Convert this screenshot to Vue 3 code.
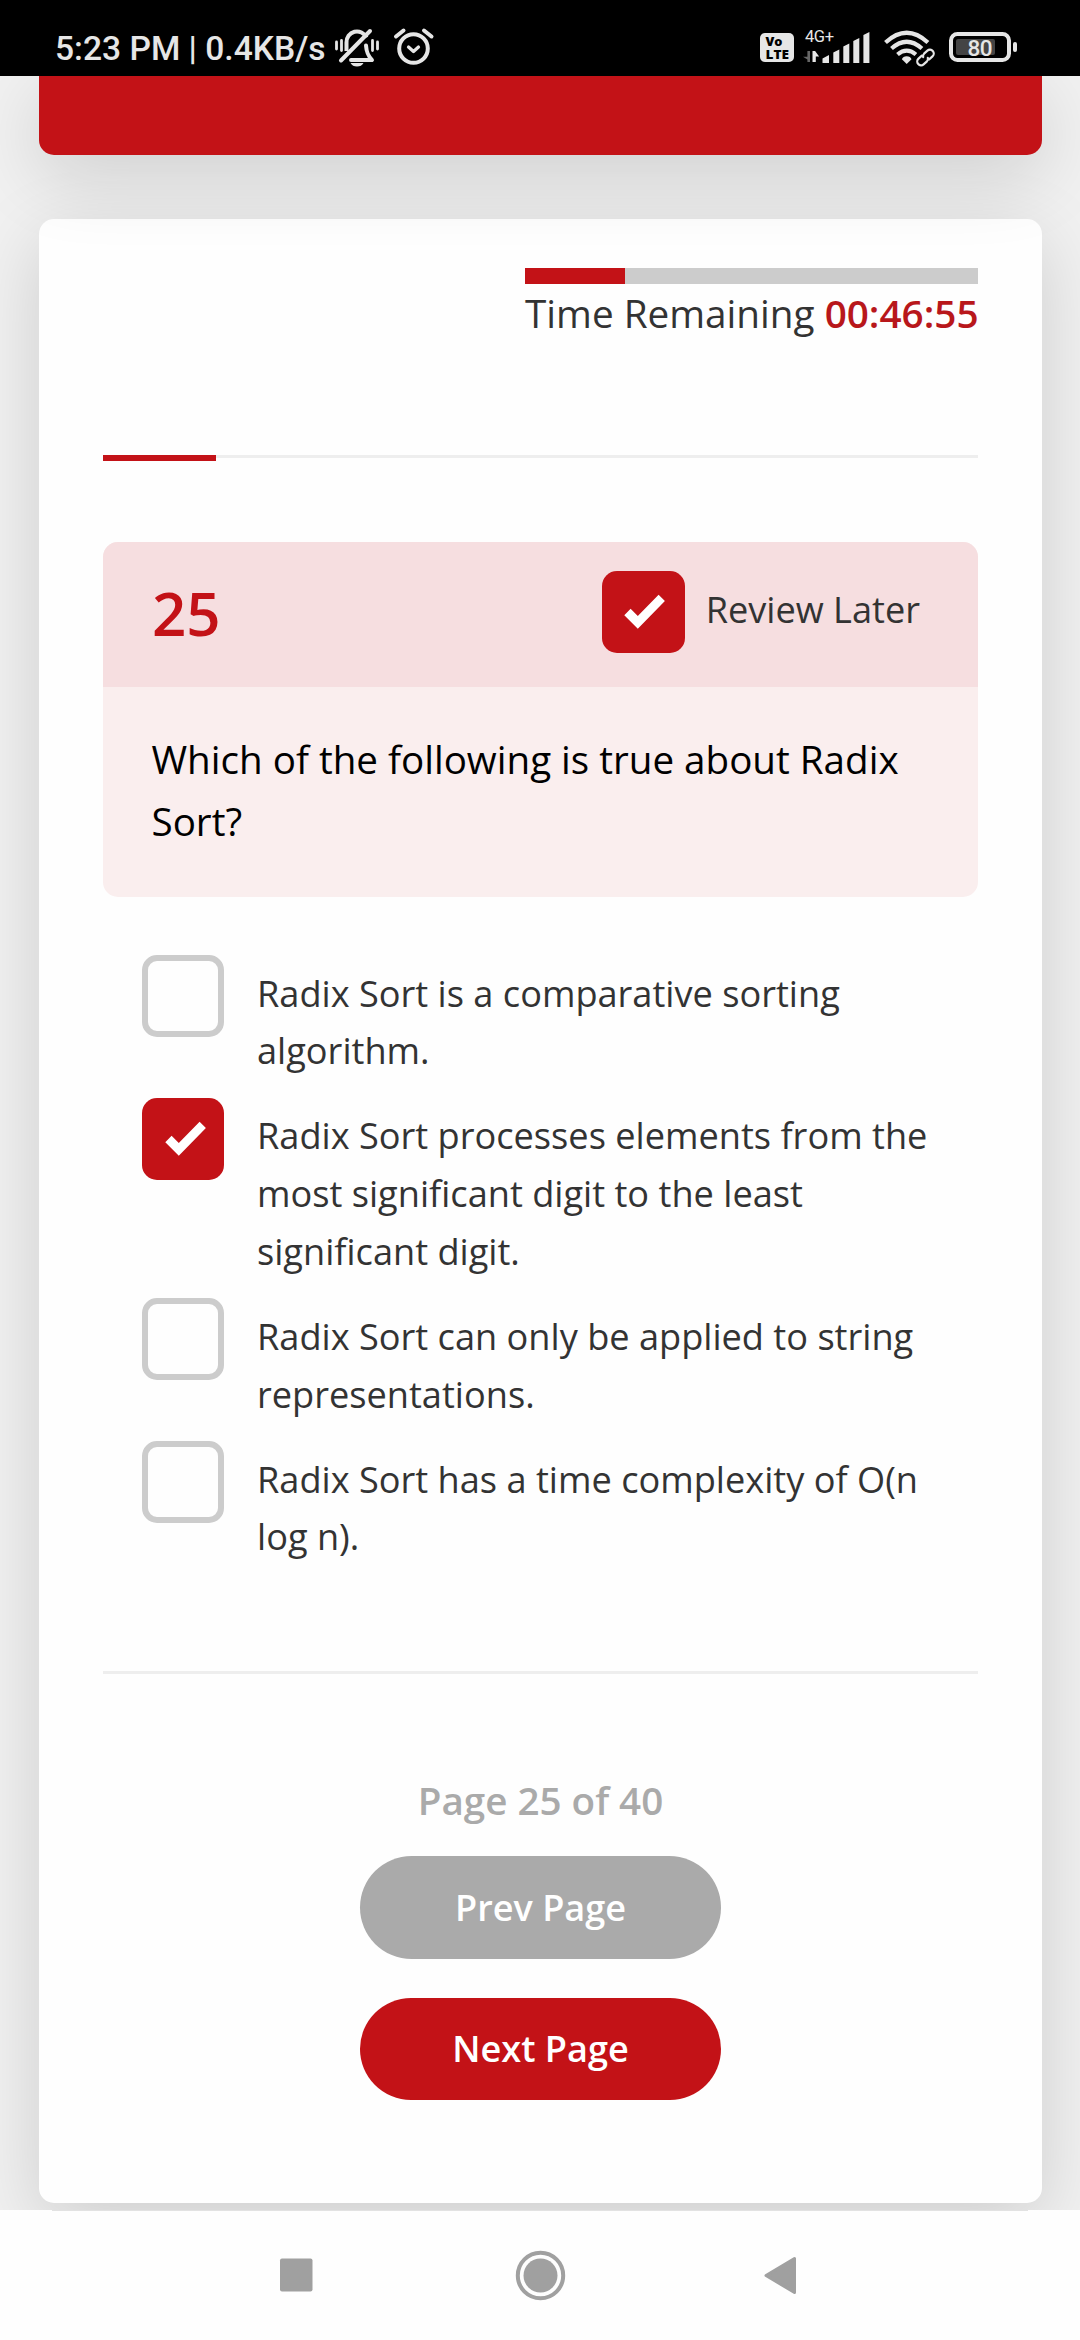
<script setup>
const question = {
  number: 25,
  text: 'Which of the following is true about Radix Sort?',
  options: [
    { text: 'Radix Sort is a comparative sorting algorithm.', checked: false },
    { text: 'Radix Sort processes elements from the most significant digit to the least significant digit.', checked: true },
    { text: 'Radix Sort can only be applied to string representations.', checked: false },
    { text: 'Radix Sort has a time complexity of O(n log n).', checked: false },
  ],
}
</script>

<template>
  <div class="screen">
    <header class="status">
      <span class="clock">5:23 PM | 0.4KB/s</span>
      <svg class="bell" width="46" height="42" viewBox="334 27 46 42" fill="none" stroke="#e6e6e6">
        <path d="M346.500 51V42.500a10.500 10.500 0 0 1 20-5" stroke-width="4" />
        <path d="M366 45.500c.5 7 2 10 6 14.500H351" stroke-width="4" stroke-linejoin="round" stroke-linecap="round" />
        <path d="M341 60.500L370 31" stroke-width="4" stroke-linecap="round" />
        <path d="M350.500 63h13q-2 3.600-6.500 3.600t-6.500-3.600z" fill="#e6e6e6" stroke="none" />
        <path d="M336.500 42v7M341.500 40.500v10M372.500 40.500v10M377.500 42v7" stroke-width="2.800" stroke-linecap="round" />
      </svg>
      <svg class="alarm" width="42" height="42" viewBox="393 27 42 42" fill="none" stroke="#e6e6e6" stroke-linecap="round">
        <circle cx="413.500" cy="48.500" r="14.300" stroke-width="4" />
        <path d="M408.500 47l5 4.500 5-4.500" stroke-width="3.200" stroke-linejoin="round" />
        <path d="M396 36.500l7.500-6M431.500 36.500l-7.500-6" stroke-width="4" />
      </svg>
      <span class="spacer"></span>
      <svg class="system" width="260" height="44" viewBox="758 26 260 44">
        <rect x="760" y="33" width="34" height="29" rx="5" fill="#e6e6e6" />
        <text class="volte"><tspan x="765.500" y="46" textLength="17" lengthAdjust="spacingAndGlyphs">Vo</tspan><tspan x="765.500" y="58.500" textLength="23.500" lengthAdjust="spacingAndGlyphs">LTE</tspan></text>
        <text x="805" y="41.800" class="network" textLength="29">4G+</text>
        <path d="M810 51v11h-2.600v-2.500l-4.400-2.800h4.400V51z" fill="#666" />
        <path d="M812.500 62V51h2.600l4 5.600h-3.300V62z" fill="#e6e6e6" />
        <g fill="#e6e6e6">
          <path d="M822.500 63v-4.500l6.500-3.500v8zM833.300 63v-10.500l6-3v13.500zM843.300 63v-16.500l6-3v19.500zM853.300 63v-22l6-3v25zM863.400 63v-28l6-3v31z" />
          <path d="M906.700 64l-4.800-4.800q1-3 4.800-3t4.800 3z" />
        </g>
        <g fill="none" stroke="#e6e6e6" stroke-width="4.200">
          <path d="M885.500 42.500q21.200-19.500 42.400 0M891.500 48.500q15.200-13.600 30.400 0M897.500 54.500q9.200-7.600 18.400 0" />
        </g>
        <g fill="none" stroke-linecap="round" transform="rotate(-42 925.500 57.500)">
          <path d="M922 53.700h-2.500a3.800 3.800 0 0 0 0 7.600h4.500M929 61.300h2.500a3.800 3.800 0 0 0 0-7.600H927M922.500 57.500h6" stroke="#000" stroke-width="5" />
          <path d="M924 53.700h-4.500a3.800 3.800 0 0 0 0 7.600h4.500a3.500 3.500 0 0 0 3-2M927 61.300h4.500a3.800 3.800 0 0 0 0-7.600H927a3.500 3.500 0 0 0-3 2" stroke="#e6e6e6" stroke-width="2.200" />
        </g>
        <rect x="951" y="34" width="58" height="26" rx="6.500" fill="none" stroke="#e6e6e6" stroke-width="4" />
        <rect x="956" y="39" width="39" height="16" rx="2" fill="#444" />
        <rect x="1013" y="42" width="4" height="10" rx="2" fill="#e6e6e6" />
        <text x="967.500" y="55.700" class="level" textLength="25">80</text>
      </svg>
    </header>

    <main class="page">
      <section class="banner"></section>

      <section class="card">
        <div class="timer">
          <div class="timer-track"><div class="timer-fill"></div></div>
          <p class="timer-text">Time Remaining <b>00:46:55</b></p>
        </div>

        <div class="progress"><div class="progress-fill"></div></div>

        <article class="question">
          <div class="question-head">
            <span class="number">{{ question.number }}</span>
            <span class="box checked">
              <svg width="82" height="82" viewBox="0 0 82 82"><path d="M22.300 44.300l6.300-6.500 7.200 7.200 20.800-21.300 6.300 6.300-27.100 27.700z" fill="#fff" /></svg>
            </span>
            <span class="review">Review Later</span>
          </div>
          <p class="question-text">{{ question.text }}</p>
        </article>

        <ul class="options">
          <li v-for="option in question.options" :key="option.text" class="option">
            <span class="box" :class="{ checked: option.checked }">
              <svg v-if="option.checked" width="82" height="82" viewBox="0 0 82 82"><path d="M23.300 44.300l6.300-6.500 7.200 7.200 20.800-21.300 6.300 6.300-27.100 27.700z" fill="#fff" /></svg>
            </span>
            <span class="option-text">{{ option.text }}</span>
          </li>
        </ul>

        <hr class="rule" />

        <footer class="pager">
          <p class="page-count">Page 25 of 40</p>
          <button class="btn prev">Prev Page</button>
          <button class="btn next">Next Page</button>
        </footer>
      </section>
    </main>

    <nav class="navbar">
      <svg width="1080" height="129" viewBox="0 0 1080 129" fill="#a0a0a0">
        <rect x="52" y="0" width="976" height="1" fill="#e2e2e2" />
        <rect x="280" y="48.500" width="32.500" height="33" rx="2" />
        <circle cx="540.500" cy="65.500" r="22.700" fill="none" stroke="#a0a0a0" stroke-width="4" />
        <circle cx="540.500" cy="65.500" r="17" />
        <path d="M766 65.500l28.500-17v34z" stroke="#a0a0a0" stroke-width="3" stroke-linejoin="round" />
      </svg>
    </nav>
  </div>
</template>

<style>
body {
  margin: 0;
  background: #f1f1f1;
}
</style>

<style scoped>
.screen {
  width: 1080px;
  height: 2340px;
  display: flex;
  flex-direction: column;
  overflow: hidden;
  background: #f1f1f1;
  color: #333;
  font-family: "Open Sans", "Noto Sans", sans-serif;
}
p, ul {
  margin: 0;
  padding: 0;
}
.status {
  position: relative;
  z-index: 3;
  flex: none;
  height: 76px;
  box-sizing: border-box;
  padding: 26px 62px 0 55px;
  display: flex;
  align-items: flex-start;
  background: #000;
  color: #e6e6e6;
}
.clock {
  width: 279px;
  font: 500 33.600px/46px Roboto, sans-serif;
  white-space: nowrap;
}
.bell {
  margin-top: 1px;
}
.alarm {
  margin: 1px 0 0 13px;
}
.spacer {
  flex: 1;
}
.volte {
  font: 800 12.500px "Open Sans", sans-serif;
  fill: #000;
}
.network {
  font: 400 16.500px Roboto, sans-serif;
  fill: #e6e6e6;
}
.level {
  font: 500 22.500px Roboto, sans-serif;
  fill: #e6e6e6;
}
.page {
  flex: none;
  height: 2134px;
  box-sizing: border-box;
  padding: 0 38px 0 39px;
}
.banner,
.card {
  box-shadow: 0 20px 75px rgba(0, 0, 0, 0.15);
}
.banner {
  position: relative;
  z-index: 1;
  height: 79px;
  border-radius: 0 0 15px 15px;
  background: #c31217;
}
.card {
  height: 1984px;
  margin-top: 64px;
  box-sizing: border-box;
  padding: 49px 64px 0 64px;
  border-radius: 15px;
  background: #fefefe;
}
.timer {
  width: 453px;
  margin-left: auto;
}
.timer-track {
  height: 16px;
  background: #ccc;
}
.timer-fill {
  width: 100px;
  height: 16px;
  background: #c31217;
}
.timer-text {
  font-size: 38.700px;
  line-height: 58px;
  white-space: nowrap;
}
.timer-text b {
  color: #b8171b;
  font-weight: 600;
}
.progress {
  height: 3px;
  margin-top: 113px;
  background: #eee;
}
.progress-fill {
  width: 113px;
  height: 6px;
  background: #c31217;
}
.question {
  height: 355px;
  margin-top: 84px;
  border-radius: 15px;
  overflow: hidden;
  background: #faeeee;
}
.question-head {
  height: 145px;
  box-sizing: border-box;
  padding: 0 58px 0 49px;
  display: flex;
  align-items: flex-start;
  background: #f6dee0;
}
.number {
  flex: 1;
  color: #c31217;
  font-size: 60px;
  font-weight: 600;
  line-height: 142px;
}
.box {
  flex: none;
  width: 82px;
  height: 82px;
  box-sizing: border-box;
  border: 6px solid #ccc;
  border-radius: 15px;
}
.box.checked {
  border: 0;
  background: #c31217;
}
.box svg {
  display: block;
}
.question-head .box {
  width: 83px;
  margin-top: 29px;
}
.review {
  margin: 38px 0 0 21px;
  font-size: 36.150px;
  line-height: 58px;
}
.question-text {
  padding: 41px 49px 0 48.500px;
  color: #000;
  font-size: 38.600px;
  line-height: 62px;
}
.options {
  padding: 58px 39px 0;
  list-style: none;
}
.option {
  display: flex;
  gap: 33px;
  margin-bottom: 17.700px;
}
.option-text {
  padding-top: 9.500px;
  font-size: 36.170px;
  line-height: 57.800px;
}
.rule {
  height: 3px;
  margin: 104.700px 0 0;
  border: 0;
  background: #eee;
}
.pager {
  display: flex;
  flex-direction: column;
  align-items: center;
  padding-top: 95px;
}
.page-count {
  color: #aaa;
  font-size: 38.600px;
  font-weight: 600;
  line-height: 62px;
}
.btn {
  width: 361px;
  height: 103px;
  padding: 0;
  border: 0;
  border-radius: 52px;
  color: #fff;
  font: 600 36.100px/103px "Open Sans", sans-serif;
}
.prev {
  margin-top: 25px;
  background: #aaa;
}
.next {
  height: 102px;
  margin-top: 39px;
  line-height: 101px;
  background: #c31217;
}
.navbar {
  position: relative;
  z-index: 3;
  flex: none;
  height: 130px;
  background: #fefefe;
}
</style>
